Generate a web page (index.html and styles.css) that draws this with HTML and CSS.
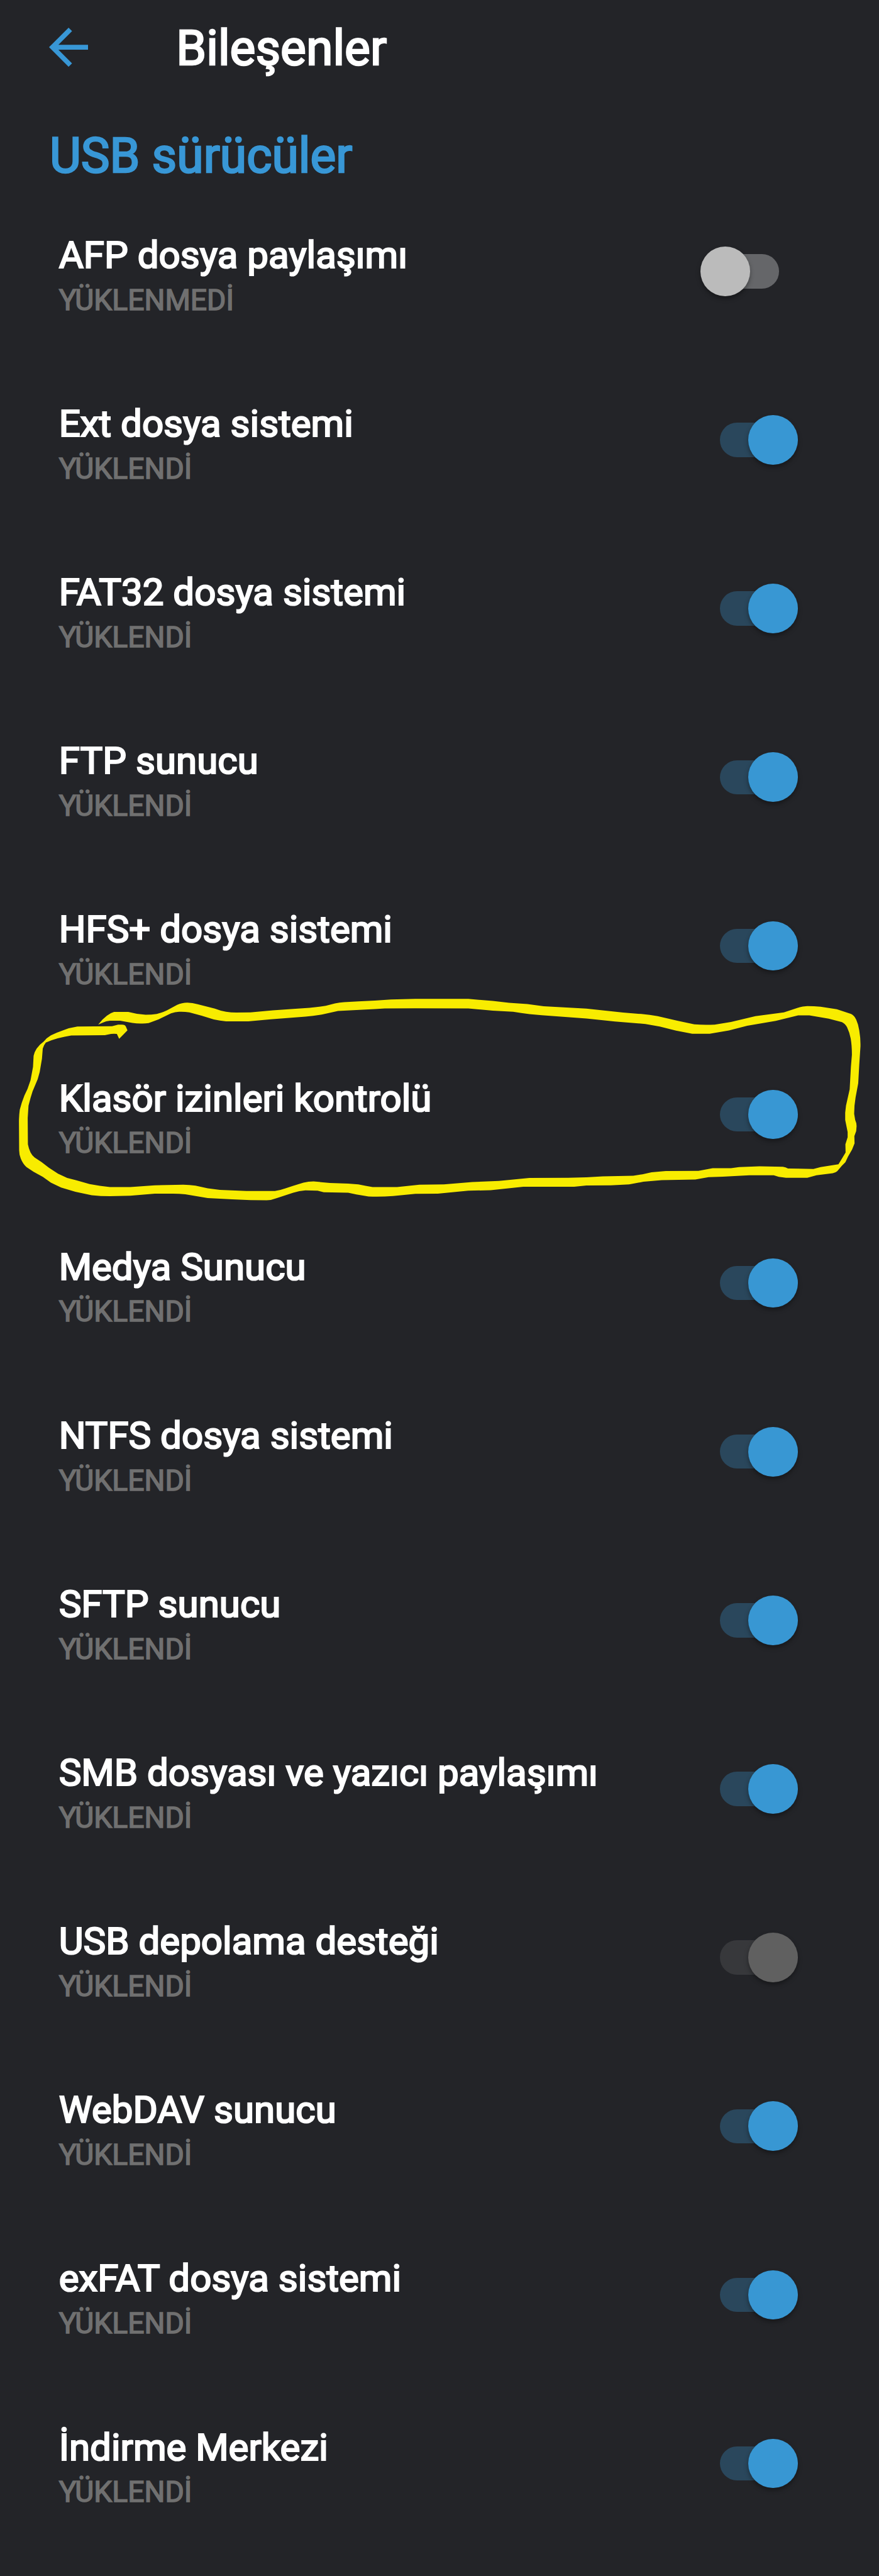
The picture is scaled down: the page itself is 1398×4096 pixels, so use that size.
FILE: index.html
```html
<!DOCTYPE html>
<html lang="tr">
<head>
<meta charset="utf-8">
<title>Bileşenler</title>
<link rel="stylesheet" href="styles.css">
</head>
<body>
<header class="app-bar">
  <svg class="back" viewBox="4 4 16 16" aria-hidden="true"><path d="M20 11H7.83l5.59-5.59L12 4l-8 8 8 8 1.41-1.41L7.83 13H20z"/></svg>
  <h1 class="title">Bileşenler</h1>
</header>
<main>
  <h2 class="section">USB sürücüler</h2>
  <ul class="list">
    <li class="row"><div class="text"><div class="name">AFP dosya paylaşımı</div><div class="status">YÜKLENMEDİ</div></div><span class="switch off"><span class="thumb"></span></span></li>
    <li class="row"><div class="text"><div class="name">Ext dosya sistemi</div><div class="status">YÜKLENDİ</div></div><span class="switch"><span class="thumb"></span></span></li>
    <li class="row"><div class="text"><div class="name">FAT32 dosya sistemi</div><div class="status">YÜKLENDİ</div></div><span class="switch"><span class="thumb"></span></span></li>
    <li class="row"><div class="text"><div class="name">FTP sunucu</div><div class="status">YÜKLENDİ</div></div><span class="switch"><span class="thumb"></span></span></li>
    <li class="row"><div class="text"><div class="name">HFS+ dosya sistemi</div><div class="status">YÜKLENDİ</div></div><span class="switch"><span class="thumb"></span></span></li>
    <li class="row"><div class="text"><div class="name">Klasör izinleri kontrolü</div><div class="status">YÜKLENDİ</div></div><span class="switch"><span class="thumb"></span></span>
      <svg class="marker" viewBox="0 0 4317 1200" aria-hidden="true"><path d="M482 232L503 208L525 188Q540 176 560 170H630L672 179L715 184Q745 184 770 180Q795 174 820 162L870 135Q893 124 920 124Q946 124 970 132L1055 154Q1082 165 1110 169Q1135 173 1160 173L1230 172L1340 162L1440 155L1520 150Q1563 146 1600 140L1645 128Q1667 123 1690 122L1760 118L1840 114L1920 109L2040 106H2300L2420 116L2500 125L2590 131L2670 142L2880 154L3060 173L3150 180Q3192 184 3230 191L3330 214L3410 231Q3460 235 3510 232L3590 219L3710 191L3850 172L3920 149Q3940 142 3965 141Q3998 141 4030 144L4110 157L4180 180Q4196 188 4205 208Q4216 232 4220 260Q4227 300 4226 340L4220 430L4215 520L4202 590Q4195 630 4195 670L4200 700Q4207 715 4207 730L4205 755L4196 780L4197 815L4185 845L4165 880L4152 908L4135 925L4112 952Q4103 960 4090 962L4010 972L3965 984H3860L3825 980L3800 972H3680L3550 979L3480 981L3415 993L3250 996L3160 1004L3090 1017L3000 1021L2880 1022L2820 1028H2570L2410 1045L2300 1048L2150 1062L2040 1063L1930 1074Q1870 1078 1810 1076L1750 1066L1710 1058L1590 1055L1560 1048L1500 1046Q1470 1048 1440 1058L1360 1084Q1335 1094 1310 1095L1230 1094L1140 1090L1020 1084L910 1065Q880 1062 850 1062H760L640 1072L540 1075Q495 1075 450 1070L370 1053L300 1032L250 1008L210 980L165 955L130 932Q112 915 102 890Q94 870 94 850L93 710Q93 680 97 650L107 615L120 580L135 548L150 505L162 440L165 385Q170 365 180 350Q196 328 215 315Q229 297 250 285Q280 270 310 260Q345 247 380 242L550 240L580 232H600Q614 232 618 242L626 260L605 282L585 302L574 278Q560 276 545 278L515 284L350 286Q283 296 225 320Q215 332 210 350L206 400L195 465L185 500L160 560L150 592L140 630L136 690L137 820Q141 842 150 860Q157 874 170 885L205 908L240 935L285 964L330 985L375 997L440 1015L490 1024L540 1030H640L760 1021L900 1018Q930 1018 960 1023L1020 1036L1080 1044L1210 1049H1350Q1376 1046 1400 1037L1440 1024L1490 1008Q1515 1002 1540 1002L1620 1010L1710 1013L1760 1017L1795 1024L1830 1030H1950L2060 1018L2180 1017L2320 1005L2450 1000L2600 985L2790 984L2880 982L2960 977L3110 974L3155 967L3200 957L3270 951L3430 950L3500 937H3590L3630 932L3730 928L3845 930Q3859 932 3870 939L3995 941L4030 932L4118 918L4135 890L4153 860L4152 820L4163 785V760L4151 700L4151 665L4155 630L4173 550L4179 440L4184 380Q4184 335 4178 300Q4172 270 4160 245Q4151 228 4135 220L4070 203L3975 187H3920L3810 214L3670 238L3580 261L3485 277H3400Q3360 270 3320 262L3240 242L3170 229L3020 217L2880 202L2660 186L2600 181Q2560 175 2520 169L2420 164L2300 153L2040 152L1890 153L1840 156L1660 165L1580 183Q1540 190 1500 193L1440 198L1330 206L1220 216H1110Q1080 214 1050 207L990 188L930 172Q905 168 880 169Q860 170 840 177L780 206L730 225Q710 228 690 227Q670 227 650 224L590 213H540Q520 215 505 222Z"/></svg>
    </li>
    <li class="row"><div class="text"><div class="name">Medya Sunucu</div><div class="status">YÜKLENDİ</div></div><span class="switch"><span class="thumb"></span></span></li>
    <li class="row"><div class="text"><div class="name">NTFS dosya sistemi</div><div class="status">YÜKLENDİ</div></div><span class="switch"><span class="thumb"></span></span></li>
    <li class="row"><div class="text"><div class="name">SFTP sunucu</div><div class="status">YÜKLENDİ</div></div><span class="switch"><span class="thumb"></span></span></li>
    <li class="row"><div class="text"><div class="name">SMB dosyası ve yazıcı paylaşımı</div><div class="status">YÜKLENDİ</div></div><span class="switch"><span class="thumb"></span></span></li>
    <li class="row"><div class="text"><div class="name">USB depolama desteği</div><div class="status">YÜKLENDİ</div></div><span class="switch disabled"><span class="thumb"></span></span></li>
    <li class="row"><div class="text"><div class="name">WebDAV sunucu</div><div class="status">YÜKLENDİ</div></div><span class="switch"><span class="thumb"></span></span></li>
    <li class="row"><div class="text"><div class="name">exFAT dosya sistemi</div><div class="status">YÜKLENDİ</div></div><span class="switch"><span class="thumb"></span></span></li>
    <li class="row"><div class="text"><div class="name">İndirme Merkezi</div><div class="status">YÜKLENDİ</div></div><span class="switch"><span class="thumb"></span></span></li>
  </ul>
</main>
</body>
</html>
```
FILE: styles.css
```css
* { box-sizing: border-box; }

html {
  font-size: 9.7152px;
  background: #232428;
}

body {
  margin: 0;
  height: 421.6rem;
  overflow: hidden;
  background: #232428;
  color: #fff;
  font-family: Roboto, "Noto Sans", sans-serif;
}

.app-bar {
  display: flex;
  align-items: flex-start;
  height: 20.77rem;
  padding: 3.17rem 0 0 8rem;
}

.back {
  flex: none;
  width: 6.4rem;
  height: 6.4rem;
  margin-top: 1.36rem;
  fill: #3897d6;
}

.title,
.section {
  margin: 0;
  font-weight: 400;
  font-size: 7.92rem;
  line-height: 9.6rem;
  white-space: nowrap;
  -webkit-text-stroke: 0.26rem currentColor;
}

.title { margin-left: 14.45rem; }

.section {
  height: 9.83rem;
  padding-left: 8.13rem;
  color: #3897d6;
}

.list {
  margin: 0;
  padding: 0;
  list-style: none;
}

.row {
  position: relative;
  display: flex;
  justify-content: space-between;
  align-items: center;
  height: 27.6rem;
  padding: 0 13.3rem 0 9.64rem;
}

.text {
  align-self: flex-start;
  padding-top: 7.37rem;
  white-space: nowrap;
}

.name {
  font-size: 6.18rem;
  line-height: 7.6rem;
  -webkit-text-stroke: 0.23rem currentColor;
}

.status {
  margin-top: 0.72rem;
  color: #707070;
  font-size: 4.76rem;
  line-height: 5.6rem;
  -webkit-text-stroke: 0.16rem currentColor;
}

.switch {
  display: flex;
  align-items: center;
  justify-content: flex-end;
  width: 12.7rem;
  height: 5.6rem;
  border-radius: 2.8rem;
  background: #2a475c;
}

.thumb {
  flex: none;
  width: 8.1rem;
  height: 8.1rem;
  border-radius: 50%;
  background: #3897d3;
  box-shadow: 0 0.4rem 0.8rem rgba(0, 0, 0, 0.35);
}

.switch.off {
  justify-content: flex-start;
  margin-right: 3.1rem;
  background: #656669;
}

.off .thumb {
  margin-left: -0.1rem;
  background: #bbb;
}

.switch.disabled { background: #37383b; }
.disabled .thumb { background: #606060; }

/* Hand-drawn loop around the highlighted row */
.marker {
  position: absolute;
  top: -8.6rem;
  left: 0;
  width: 143.9rem;
  height: 40rem;
  fill: #f8ec00;
  pointer-events: none;
}
```
